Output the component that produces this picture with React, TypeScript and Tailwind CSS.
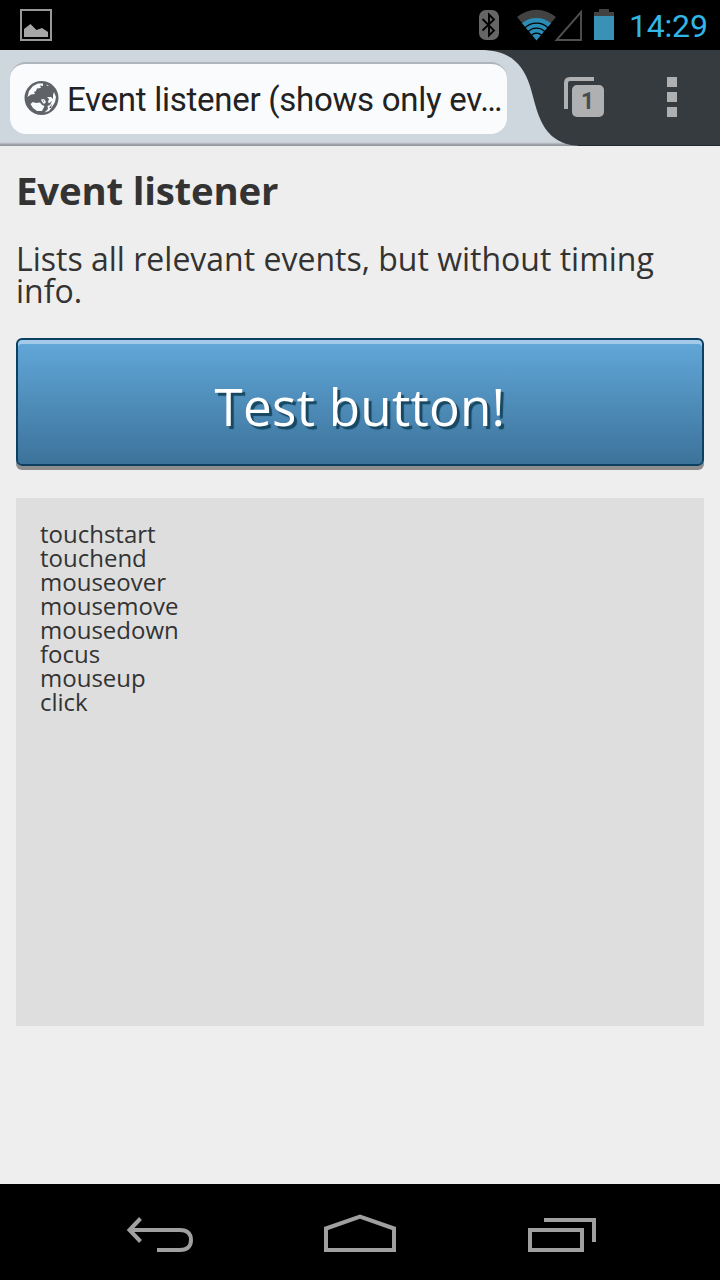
const events = ['touchstart', 'touchend', 'mouseover', 'mousemove', 'mousedown', 'focus', 'mouseup', 'click'];

function StatusBar() {
  return (
    <div className="flex h-[50px] shrink-0 items-center bg-black pl-5 pr-3">
      <svg width="32" height="50" viewBox="20 0 32 50">
        <rect x="21" y="10" width="30" height="30" fill="none" stroke="#999" strokeWidth="2" />
        <path d="M24 37V29L30.500 24L36.500 30L42 28L48 32V37Z" fill="#a6a6a6" />
      </svg>
      <div className="flex-1" />
      <svg width="140" height="50" viewBox="475 0 140 50">
        <rect x="479" y="10" width="20" height="30" rx="7" fill="#666" />
        <path d="M482.500 19L494 30.500L489 35.500V14.500L494 19.500L482.500 30.500" fill="none" stroke="#000" strokeWidth="1.900" />
        <path d="M536.500 40L517 17A30 30 0 0 1 556 17Z" fill="#424242" />
        <path d="M536.500 40.500L522 23.300A22.500 22.500 0 0 1 551 23.300Z" fill="#2b8db5" />
        <path
          d="M524.500 28.200A16.700 16.700 0 0 1 548.500 28.200M528 31.700A11.800 11.800 0 0 1 545 31.700M531.500 35.200A7 7 0 0 1 541.500 35.200"
          fill="none"
          stroke="#000"
          strokeWidth="1.300"
        />
        <path d="M581 12V40H556.500Z" fill="none" stroke="#505050" strokeWidth="1.900" />
        <path d="M599 9H609V12H614V16H594V12H599Z" fill="#424242" />
        <rect x="594" y="16" width="20" height="24" fill="#3992b5" />
      </svg>
      <span className="ml-[14px] w-[79px] whitespace-nowrap font-['Roboto',sans-serif] text-[32px] leading-[50px] tracking-[-0.2px] text-[#33b5e5]">
        <span className="relative top-px">14:29</span>
      </span>
    </div>
  );
}

function Globe() {
  return (
    <svg className="mb-0.5 shrink-0" width="36" height="36" viewBox="0 0 36 36">
      <circle cx="17.500" cy="18" r="17" fill="#5f6368" />
      <g fill="#fafbfd">
        <path d="M3.500 17L5 11L9 6L14 3.500L19 3.500L19 6L16 5.500L17 8L13 8.500L12 11L10 12L11 14L7 14.500Z" />
        <path d="M22 4.500L25 5.500L23.500 6Z" />
        <path d="M6.500 24L9 22L12 23L16 22.500L18 25L20.500 26L19 29L18 31L13 31L9 28Z" />
        <path d="M30 12L32 17L31 22L28 27L25 31L20.500 32.500L24 29L23.500 26L26 25L24 22L25 19L23 17L27 17L29 19L29 15Z" />
        <path d="M17 19.500L20 19L22 22L20 24L18 22Z" />
      </g>
      <path d="M24 24L28 21L26 25ZM18.500 20.500L20 20.500L20 22ZM25 28L28 24L27 28Z" fill="#5f6368" />
    </svg>
  );
}

function Toolbar() {
  return (
    <div className="relative flex h-24 shrink-0 items-start bg-[#363b3f]">
      <svg className="absolute left-0 top-0" width="720" height="96" viewBox="0 0 720 96">
        <defs>
          <linearGradient id="edge" x1="0" y1="0" x2="0" y2="96" gradientUnits="userSpaceOnUse">
            <stop offset=".96" stopColor="#ced6de" />
            <stop offset=".985" stopColor="#9ea2a6" />
            <stop offset="1" stopColor="#8f9296" />
          </linearGradient>
        </defs>
        <path d="M0 0H480C508 0 522 12 530 36C538 62 541 96 583 96H0Z" fill="url(#edge)" />
        <path d="M578 95.500H720" stroke="#25282b" />
      </svg>
      <div className="relative ml-[10px] mt-3 flex h-[72px] w-[497px] items-center rounded-[16px] border-t-2 border-[#aeb5bd] bg-[#fafbfd] pl-[14px]">
        <Globe />
        <span className="ml-[7px] mt-px whitespace-nowrap font-['Roboto',sans-serif] text-[33px] leading-[40px] tracking-[-0.270px] text-[#222]">Event listener (shows only ev…</span>
      </div>
      <svg className="relative ml-[57px] mt-[27px]" width="40" height="40" viewBox="0 0 40 40">
        <path d="M2 32V6Q2 2 6 2H30" fill="none" stroke="#afb0b2" strokeWidth="4" />
        <rect x="8" y="8" width="32" height="32" rx="5" fill="#afb0b2" />
        <text x="23.500" y="32" textAnchor="middle" fontFamily="Roboto" fontWeight="700" fontSize="23" fill="#474c50">1</text>
      </svg>
      <div className="relative ml-[63px] mt-[27px] flex flex-col gap-[5px]">
        <i className="size-[10px] bg-[#afb0b2]" />
        <i className="size-[10px] bg-[#afb0b2]" />
        <i className="size-[10px] bg-[#afb0b2]" />
      </div>
    </div>
  );
}

function NavBar() {
  return (
    <div className="flex h-24 shrink-0 bg-black">
      <svg width="720" height="96" viewBox="0 0 720 96" fill="none" stroke="#a0a0a0" strokeWidth="4">
        <path d="M130 46H180C187.500 46 191 50 191 56C191 62 187.500 66 180 66H157" />
        <path d="M140.500 34.500L129.500 46L140.500 57.500" />
        <path d="M326 66V44.500L360 32.500L394 44.500V66Z" />
        <path d="M530 46H582V66H530ZM544 36H594V58" />
      </svg>
    </div>
  );
}

export default function App() {
  return (
    <div className="flex h-[1280px] w-[720px] flex-col overflow-hidden bg-[#eee]">
      <StatusBar />
      <Toolbar />
      <main className="flex flex-1 flex-col px-4 pt-[25px] font-['Open_Sans','Noto_Sans',sans-serif] text-[#333]">
        <h1 className="text-[38.400px] font-bold leading-[38px] tracking-[-0.200px]">Event listener</h1>
        <p className="mt-[34px] text-[32px] leading-8">Lists all relevant events, but without timing info.</p>
        <button className="mt-[31px] h-32 w-full shrink-0 rounded-[6px] border-2 border-[#0b4060] bg-linear-to-b from-[#62a8da] to-[#3c739b] pt-[9px] text-[51.200px] leading-[51px] tracking-[0.250px] text-white shadow-[0_4px_0_#8d8d8d,inset_0_4px_0_#a3cbe9] [text-shadow:3px_3px_1px_#174761]">
          Test button!
        </button>
        <div className="mt-8 h-[528px] bg-[#dedede] p-6 text-[24px] leading-6">
          {events.map((name) => (
            <div key={name}>{name}</div>
          ))}
        </div>
      </main>
      <NavBar />
    </div>
  );
}
